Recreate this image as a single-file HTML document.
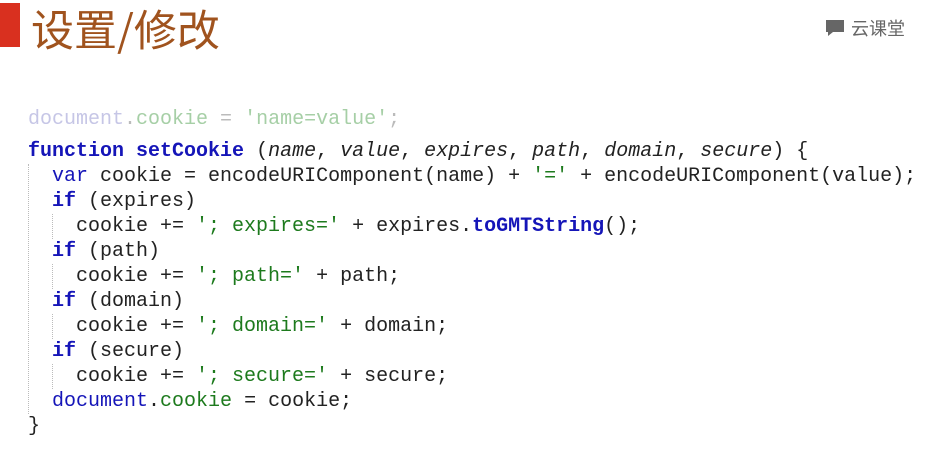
<!DOCTYPE html>
<html><head><meta charset="utf-8"><style>
body{margin:0;width:929px;height:455px;background:#fff;position:relative;overflow:hidden;font-family:"Liberation Sans","Noto Sans CJK SC",sans-serif}
.bar{position:absolute;left:0;top:3px;width:20px;height:44px;background:#d9301f}
.title{position:absolute;left:31px;top:-3px;font-size:43px;color:#a0531e;font-family:"Noto Sans CJK SC",sans-serif;letter-spacing:0px}
.logo{position:absolute;left:825px;top:15px;color:#666;font-size:18px;font-family:"Noto Sans CJK SC",sans-serif}
.code{position:absolute;left:28px;font-family:"Liberation Mono",monospace;font-size:20px;line-height:25px;white-space:pre;color:#222}
.k{color:#1515b8}.b{font-weight:bold}.s{color:#1d7a1d}.i{font-style:italic}
.f1{color:#c6c6e6}.f2{color:#a6cfa6}.f3{color:#bbb}
.g{position:absolute;width:1px;border-left:1px dotted #bbb}
</style></head><body>
<div class="bar"></div>
<div class="title">设置/修改</div>
<div class="logo"><svg width="21" height="21" style="vertical-align:-3px;margin-right:5px"><path d="M1 3h18v12H8l-5 4v-4H1z" fill="#666"/></svg>云课堂</div>
<div class="g" style="left:28px;top:164px;height:250px"></div>
<div class="g" style="left:52px;top:214px;height:25px"></div>
<div class="g" style="left:52px;top:264px;height:25px"></div>
<div class="g" style="left:52px;top:314px;height:25px"></div>
<div class="g" style="left:52px;top:364px;height:25px"></div>
<div class="code" style="top:107px"><span class="f1">document</span><span class="f3">.</span><span class="f2">cookie</span><span class="f3"> = </span><span class="f2">'name=value'</span><span class="f3">;</span></div>
<div class="code" style="top:139px"><span class="k b">function</span> <span class="k b">setCookie</span> (<span class="i">name</span>, <span class="i">value</span>, <span class="i">expires</span>, <span class="i">path</span>, <span class="i">domain</span>, <span class="i">secure</span>) {
  <span class="k">var</span> cookie = encodeURIComponent(name) + <span class="s">'='</span> + encodeURIComponent(value);
  <span class="k b">if</span> (expires)
    cookie += <span class="s">'; expires='</span> + expires.<span class="k b">toGMTString</span>();
  <span class="k b">if</span> (path)
    cookie += <span class="s">'; path='</span> + path;
  <span class="k b">if</span> (domain)
    cookie += <span class="s">'; domain='</span> + domain;
  <span class="k b">if</span> (secure)
    cookie += <span class="s">'; secure='</span> + secure;
  <span class="k">document</span>.<span class="s">cookie</span> = cookie;
}</div>
</body></html>
